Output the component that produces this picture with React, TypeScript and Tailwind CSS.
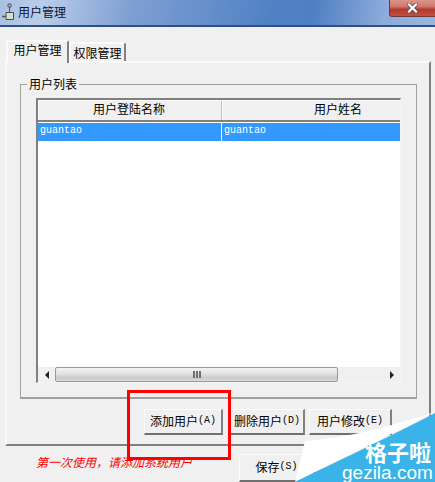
import React from 'react';

const cjk = "font-['Noto_Sans_CJK_SC',sans-serif]";

const Key: React.FC<{ k: string }> = ({ k }) => (
  <span className="font-['Liberation_Mono',monospace] text-[10px]">({k})</span>
);

const Btn: React.FC<{ label: string; k: string; className: string }> = ({ label, k, className }) => (
  <div
    className={`flex items-center justify-center pb-[2px] bg-[#f0f0f0] border border-t-[#fbfbfb] border-l-[#fbfbfb] border-r-[#808080] border-b-[#707070] border-r-2 border-b-2 text-[12px] leading-none text-black ${className}`}
  >
    {label}
    <Key k={k} />
  </div>
);

const App: React.FC = () => {
  return (
    <div className={`relative w-[435px] h-[482px] overflow-hidden bg-[#f0f0f0] ${cjk}`}>
      {/* title bar */}
      <div className="relative flex items-center h-[27px] pl-[18px] pb-[2px] border-b-2 border-b-[#2f4f86] bg-[linear-gradient(100deg,#a9c0e2_0%,#b9cdea_10%,#7f9fd3_30%,#5181c4_62%,#5080c3_72%,#8dabdb_88%,#9ab5df_100%)]">
        <span className="text-[12px] leading-none text-[#0b1030]">用户管理</span>
        <svg viewBox="0 0 12 17" className="absolute left-[2px] top-[3px] w-[12px] h-[17px]">
          <path d="M4 9.5h7.5v7H4z" fill="#dcdcd0" stroke="#4a4a4a" />
          <path d="M0 13.5h4" stroke="#555" strokeWidth="1.5" />
          <path d="M7.5 9V4M6 1h3v3H6z" stroke="#555" fill="none" />
        </svg>
        {/* close button */}
        <div className="absolute right-0 top-0 w-[46px] h-[17px] flex items-center justify-center rounded-bl-[3px] border-l border-b border-[#6d3a3a] bg-[linear-gradient(180deg,#d9968c_0%,#d2786c_40%,#b33a2c_60%,#c2503f_100%)]">
          <svg viewBox="0 0 11 10" className="w-[11px] h-[10px]">
            <path d="M2 1.5l7 7M9 1.5l-7 7" stroke="#4a4a5a" strokeWidth="3.6" strokeLinecap="square" />
            <path d="M2 1.5l7 7M9 1.5l-7 7" stroke="#fff" strokeWidth="2.2" strokeLinecap="square" />
          </svg>
        </div>
      </div>

      {/* tabs */}
      <div className="flex items-end h-[34px] pl-[6px] text-[12px] leading-none text-black">
        <div className="relative z-10 flex items-center justify-center w-[63px] h-[23px] -mb-[2px] pb-[5px] bg-[#f0f0f0] border-t-2 border-l-2 border-[#fbfbfb] border-r-2 border-r-[#808080] rounded-t-[2px]">
          用户管理
        </div>
        <div className="flex items-center justify-center w-[57px] h-[19px] bg-[#f0f0f0] border-t-2 border-l-2 border-[#fbfbfb] border-r-2 border-r-[#808080] rounded-t-[2px]">
          权限管理
        </div>
      </div>

      {/* tab panel */}
      <div className="ml-[5px] w-[426px] h-[385px] pt-[21px] pl-[13px] border-t-2 border-l-2 border-t-[#fafafa] border-l-[#fafafa] border-r-2 border-r-[#808080] border-b-2 border-b-[#808080]">
        <div className="relative w-[397px] h-[315px] pt-[13px] pl-[15px] border border-[#a0a0a0] border-b-2 border-b-[#a0a0a0]">
          <span className="absolute left-[6px] -top-[8px] px-[2px] bg-[#f0f0f0] text-[12px] leading-[14px] text-black">用户列表</span>

          {/* list */}
          <div className="flex flex-col w-[365px] h-[285px] bg-white border-t-2 border-l-2 border-t-[#808080] border-l-[#808080] border-r border-r-[#f4f4f4] border-b border-b-[#f4f4f4]">
            <div className="flex h-[22px] bg-[#f0f0f0] border-b-2 border-b-[#808080] border-t border-t-[#fbfbfb] text-[12px] leading-none text-black">
              <div className="flex items-center justify-center w-[184px] pr-[2px] pb-[3px] border-l border-l-[#fbfbfb] border-r border-r-[#c0c0c0]">用户登陆名称</div>
              <div className="flex flex-1 items-center justify-start pl-[91px] pb-[3px] border-l border-l-[#fbfbfb]">用户姓名</div>
            </div>
            <div className="flex h-[18px] mt-px bg-[#3399ff] font-['Liberation_Mono',monospace] text-[10px] leading-[16px] text-white">
              <div className="w-[184px] pl-[2px] border-r border-r-white">guantao</div>
              <div className="pl-[2px]">guantao</div>
            </div>
            <div className="flex-1" />

            {/* horizontal scrollbar */}
            <div className="flex items-stretch h-[15px] bg-[#f0f0f0]">
              <div className="flex items-center justify-center w-[17px] shrink-0">
                <div className="w-0 h-0 border-y-[4px] border-y-transparent border-r-[4px] border-r-[#222]" />
              </div>
              <div className="flex items-center justify-center w-[283px] rounded-[2px] border border-[#9a9a9a] bg-[linear-gradient(180deg,#f2f2f2_0%,#e2e2e2_45%,#c8c8c8_75%,#dcdcdc_100%)]">
                <div className="flex gap-px">
                  <div className="w-[2px] h-[7px] bg-[#707070]" />
                  <div className="w-[2px] h-[7px] bg-[#707070]" />
                  <div className="w-[2px] h-[7px] bg-[#707070]" />
                </div>
              </div>
              <div className="flex flex-1 items-center justify-end pr-[6px]">
                <div className="w-0 h-0 border-y-[4px] border-y-transparent border-l-[4px] border-l-[#222]" />
              </div>
            </div>
          </div>
        </div>

        {/* action buttons */}
        <div className="flex mt-[10px] ml-[124px]">
          <Btn label="添加用户" k="A" className="w-[79px] h-[26px]" />
          <Btn label="删除用户" k="D" className="w-[75px] h-[26px] ml-[7px]" />
          <Btn label="用户修改" k="E" className="w-[83px] h-[26px] ml-[4px]" />
        </div>
      </div>

      {/* footer */}
      <div className="flex items-start pl-[36px] pt-[8px]">
        <span className="w-[203px] mt-px italic text-[12px] leading-[14px] text-[#ff0000]">第一次使用，请添加系统用户</span>
        <Btn label="保存" k="S" className="w-[76px] h-[28px]" />
      </div>

      {/* annotation */}
      <div className="absolute left-[127px] top-[390px] w-[104px] h-[70px] border-[3px] border-[#ff0000]" />

      {/* watermark */}
      <svg viewBox="0 0 140 70" className="absolute left-[295px] top-[412px] w-[140px] h-[70px]">
        <path d="M0 70L10 29C50 26 90 16 140 0Z" fill="#ffffff" />
        <path d="M0 70C40 50 95 25 140 1V70Z" fill="#3ab4e8" />
      </svg>
      <span className="absolute left-[365px] top-[440px] text-[22px] leading-[22px] font-bold text-white">格子啦</span>
      <span className="absolute left-[342px] top-[464px] font-['Liberation_Sans',sans-serif] text-[19px] leading-[17px] text-white">gezila.com</span>
    </div>
  );
};

export default App;
